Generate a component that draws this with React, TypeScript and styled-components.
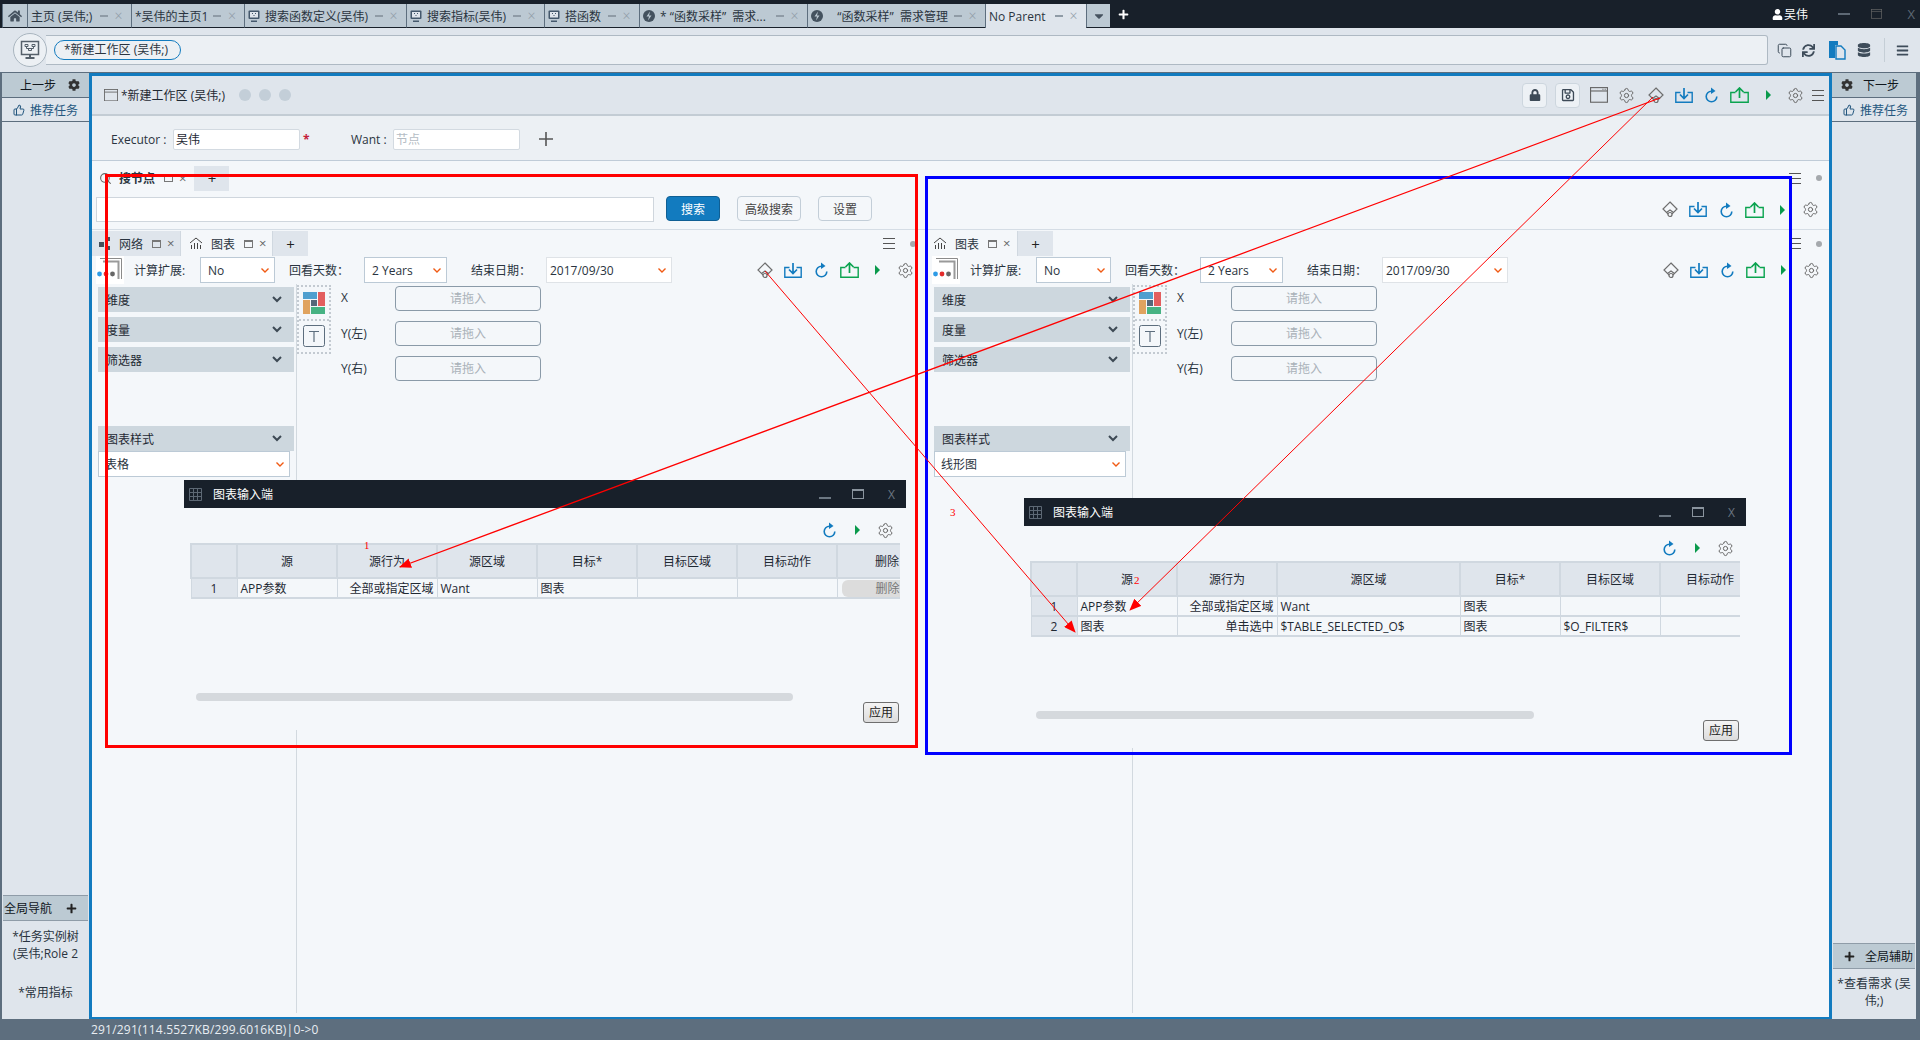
import styled, { createGlobalStyle } from "styled-components";
import { Copy, Search, Settings, ThumbsUp } from "lucide-react";
import { FaBars, FaCaretDown, FaCog, FaDatabase, FaHome, FaLock, FaPlus, FaRegSave, FaSync, FaUser } from "react-icons/fa";
import type { ReactNode } from "react";

const GlobalStyle = createGlobalStyle`
    html, body {
        margin: 0;
        padding: 0;
        background: #dfe5ec;
    }
    body {
        font-family: "Open Sans", "Noto Sans CJK SC", sans-serif;
        font-size: 12px;
        color: #2a3440;
    }
    * {
        box-sizing: border-box;
    }
`;

const Page = styled.div`
    position: relative;
    width: 1920px;
    height: 1040px;
    overflow: hidden;
    display: flex;
    flex-direction: column;
`;

/* title bar */
const TitleBar = styled.div`
    height: 28px;
    background: #18202a;
    display: flex;
    align-items: flex-end;
    padding-left: 2px;
    flex-shrink: 0;
`;
const Tab = styled.div<{ $w: number; $active?: boolean }>`
    width: ${(p) => p.$w}px;
    height: 24px;
    display: flex;
    align-items: center;
    gap: 5px;
    padding: 0 8px 0 3px;
    white-space: pre;
    overflow: hidden;
    background: ${(p) => (p.$active ? "#dfe5ec" : "#bcc9d3")};
    border-left: 1px solid #5d6e7e;
    border-bottom: ${(p) => (p.$active ? "none" : "1px solid #18202a")};
    color: #2a3440;
`;
const HomeTab = styled(Tab)`
    justify-content: center;
    padding: 0;
    color: #45525f;
    font-size: 14px;
`;
const TabControls = styled.span`
    margin-left: auto;
    display: flex;
    align-items: center;
    gap: 6px;
    color: #8f9ba6;
    font-size: 13px;
`;
const TabDash = styled.i`
    display: block;
    width: 8px;
    height: 2px;
    background: #8f9ba6;
`;
const TabClose = styled.span`
    font-size: 14px;
    font-weight: 300;
    line-height: 1;
    width: 9px;
    text-align: center;
`;
const AddTab = styled.div`
    color: #fff;
    font-size: 11px;
    margin-left: 8px;
    align-self: center;
    display: flex;
`;
const WindowArea = styled.div`
    margin-left: auto;
    align-self: center;
    display: flex;
    align-items: center;
    color: #fff;
`;
const UserName = styled.span`
    margin: 0 20px 0 1px;
`;
const WinButton = styled.span`
    width: 32px;
    display: flex;
    justify-content: center;
    color: #5d6874;
    font-size: 13px;
`;
const WinMin = styled(TabDash)`
    width: 12px;
    background: #5d6874;
`;
const WinClose = styled(WinButton)`
    width: 28px;
    justify-content: flex-end;
    padding-right: 5px;
`;

/* address bar */
const AddressBar = styled.div`
    height: 45px;
    flex-shrink: 0;
    background: #dfe5ec;
    border-bottom: 1px solid #5d6e7e;
    display: flex;
    align-items: center;
    padding-left: 13px;
`;
const Logo = styled.div`
    width: 34px;
    height: 34px;
    border-radius: 50%;
    background: #ecf0f4;
    border: 1px solid #a9b5bf;
    display: flex;
    align-items: center;
    justify-content: center;
    position: relative;
    z-index: 1;
    flex-shrink: 0;
`;
const AddressField = styled.div`
    width: 1722px;
    height: 30px;
    margin-left: -1px;
    background: #ecf0f4;
    border: 1px solid #aeb9c3;
    border-left: none;
    border-radius: 0 3px 3px 0;
    display: flex;
    align-items: center;
    padding-left: 8px;
    flex-shrink: 0;
`;
const Pill = styled.div`
    width: 127px;
    height: 20px;
    border: 1px solid #127bbf;
    border-radius: 10px;
    padding-left: 9px;
    line-height: 17px;
    white-space: nowrap;
`;
const AddressTool = styled.span<{ $ml: number }>`
    display: flex;
    margin-left: ${(p) => p.$ml}px;
    color: #3e4c5a;
`;
const ToolSep = styled.i`
    width: 1px;
    height: 24px;
    background: #c5ced6;
    margin-left: 13px;
`;

/* body */
const Body = styled.div`
    flex: 1;
    min-height: 0;
    display: flex;
`;
const Side = styled.div<{ $w: number }>`
    width: ${(p) => p.$w}px;
    flex-shrink: 0;
    display: flex;
    flex-direction: column;
    background: #dfe5ec;
`;
const LeftSide = styled(Side)`
    border-left: 2px solid #5d6e7e;
`;
const RightSide = styled(Side)`
    border-right: 4px solid #5d6e7e;
`;
const StepRow = styled.div`
    height: 25px;
    background: #bccad3;
    border-bottom: 1px solid #5d6e7e;
    display: flex;
    align-items: center;
    color: #10161c;
    font-size: 12px;
`;
const PrevRow = styled(StepRow)`
    padding-left: 18px;
    gap: 12px;
`;
const NextRow = styled(StepRow)`
    padding-left: 9px;
    gap: 10px;
`;
const TaskRow = styled.div`
    height: 24px;
    border-bottom: 1px solid #5d6e7e;
    display: flex;
    align-items: center;
    gap: 5px;
    padding-left: 11px;
    color: #24577f;
`;
const SideBottom = styled.div<{ $h: number }>`
    margin-top: auto;
    height: ${(p) => p.$h}px;
    display: flex;
    flex-direction: column;
    padding: 0 1px;
`;
const NavRow = styled.div`
    height: 26px;
    background: #bccad3;
    border-top: 1px solid #8f9ca8;
    border-bottom: 1px solid #8f9ca8;
    display: flex;
    align-items: center;
    color: #10161c;
    flex-shrink: 0;
    white-space: nowrap;
`;
const LeftNavRow = styled(NavRow)`
    justify-content: space-between;
    padding-right: 11px;
    padding-left: 1px;
`;
const RightNavRow = styled(NavRow)`
    padding-left: 11px;
    gap: 10px;
`;
const NavItem = styled.div<{ $mt: number }>`
    margin-top: ${(p) => p.$mt}px;
    text-align: center;
    line-height: 17px;
    color: #2a3440;
`;

/* main frame */
const Main = styled.div`
    flex: 1;
    min-width: 0;
    position: relative;
    display: flex;
    flex-direction: column;
    border: 3px solid #127bbf;
    border-bottom-width: 2px;
    background: #f4f7fa;
`;
const Header = styled.div`
    height: 40px;
    flex-shrink: 0;
    background: #dfe5ec;
    border-bottom: 2px solid #c3ccd4;
    display: flex;
    align-items: center;
    padding-left: 12px;
`;
const HeaderTitle = styled.span`
    margin: 0 14px 0 3px;
    white-space: nowrap;
    color: #1f2933;
`;
const HeaderDot = styled.i`
    width: 12px;
    height: 12px;
    border-radius: 50%;
    background: #c3ced8;
    margin-right: 8px;
`;
const HeaderTools = styled.div`
    margin-left: auto;
    display: flex;
    align-items: center;
    padding-right: 1px;
`;
const SquareButton = styled.div`
    width: 25px;
    height: 25px;
    border: 1px solid #cdd6de;
    border-radius: 4px;
    background: #edf1f5;
    display: flex;
    align-items: center;
    justify-content: center;
    color: #3d4a57;
    margin-right: 8px;
    font-size: 14px;
`;
const FormRow = styled.div`
    height: 45px;
    flex-shrink: 0;
    background: #ecf0f4;
    border-bottom: 1px solid #c0ccd8;
    display: flex;
    align-items: center;
    padding: 2px 0 0 19px;
`;
const FormLabel = styled.span<{ $w: number }>`
    width: ${(p) => p.$w}px;
    flex-shrink: 0;
    white-space: nowrap;
`;
const FormInput = styled.div<{ $muted?: boolean }>`
    width: 127px;
    height: 21px;
    flex-shrink: 0;
    background: #fff;
    border: 1px solid #d3dae1;
    border-radius: 2px;
    line-height: 19px;
    padding-left: 2px;
    color: ${(p) => (p.$muted ? "#b4bcc4" : "#1f2933")};
`;
const Required = styled.span`
    width: 51px;
    flex-shrink: 0;
    padding-left: 3px;
    color: #c4203a;
    font-weight: 700;
`;
const PlusGlyph = styled.div`
    margin-left: 19px;
    display: flex;
    color: #555;
`;

/* search section */
const SearchHead = styled.div`
    height: 30px;
    flex-shrink: 0;
    padding-top: 4px;
    padding-right: 7px;
    display: flex;
    align-items: center;
`;
const SearchGlyph = styled.span`
    display: flex;
    margin-left: 7px;
    color: #666;
`;
const SearchTitle = styled.span`
    font-weight: 700;
    margin: 0 9px 0 7px;
    color: #2a3440;
`;
const AddPanelTab = styled.div`
    width: 35px;
    height: 25px;
    background: #dfe5ec;
    display: flex;
    align-items: center;
    justify-content: center;
    font-size: 15px;
    color: #222;
    flex-shrink: 0;
`;
const MiniControls = styled.span`
    display: flex;
    align-items: center;
    gap: 6px;
    color: #666;
    margin-right: 8px;
`;
const TabMini = styled(MiniControls)`
    margin-right: 0;
    margin-left: 1px;
`;
const MiniWindow = styled.i`
    width: 9px;
    height: 8px;
    border: 1px solid #777;
    border-top-width: 2px;
`;
const MiniClose = styled.span`
    font-size: 13px;
    line-height: 1;
`;
const SearchBar = styled.div`
    height: 39px;
    flex-shrink: 0;
    display: flex;
    align-items: center;
    padding: 0 5px 1px 4px;
    border-bottom: 1px solid #d5dde5;
`;
const SearchInput = styled.div`
    width: 558px;
    height: 25px;
    background: #fff;
    border: 1px solid #cfd6dd;
    margin-right: 12px;
`;
const Button = styled.div<{ $w: number; $ml?: number; $primary?: boolean }>`
    width: ${(p) => p.$w}px;
    height: 25px;
    margin-left: ${(p) => p.$ml ?? 0}px;
    border-radius: 4px;
    border: 1px solid ${(p) => (p.$primary ? "#0f5f94" : "#c3ced8")};
    background: ${(p) => (p.$primary ? "#127bbf" : "#f4f7fa")};
    color: ${(p) => (p.$primary ? "#fff" : "#444")};
    display: flex;
    align-items: center;
    justify-content: center;
    margin-top: -2px;
`;
const ToolIcons = styled.div`
    margin-left: auto;
    display: flex;
    align-items: center;
`;
const ToolCell = styled.span`
    width: 28px;
    display: flex;
    justify-content: center;
    align-items: center;
`;
const HeaderCell = styled(ToolCell)<{ $w: number }>`
    width: ${(p) => p.$w}px;
`;
const Bars = styled.div`
    display: flex;
    align-items: center;
    gap: 15px;
    margin-left: auto;
`;
const MenuDot = styled.i`
    width: 6px;
    height: 6px;
    border-radius: 50%;
    background: #a5a9ad;
`;

/* panels */
const Panels = styled.div`
    flex: 1;
    min-height: 0;
    display: flex;
    gap: 5px;
`;
const PanelBox = styled.div<{ $grow?: boolean }>`
    display: flex;
    flex-direction: column;
    padding-bottom: 4px;
    ${(p) => (p.$grow ? "flex: 1; min-width: 0;" : "width: 831px; flex-shrink: 0;")}
`;
const PanelTabs = styled.div`
    height: 26px;
    padding: 1px 7px 0 0;
    display: flex;
    flex-shrink: 0;
    align-items: center;
`;
const PanelTab = styled.div<{ $active?: boolean; $w: number; $pl: number }>`
    width: ${(p) => p.$w}px;
    height: 25px;
    display: flex;
    align-items: center;
    gap: 8px;
    padding-left: ${(p) => p.$pl}px;
    background: ${(p) => (p.$active ? "#f4f7fa" : "#dfe5ec")};
    color: #2a3440;
    flex-shrink: 0;
    white-space: nowrap;
    border-right: 1px solid #d0d8e0;
`;
const ControlRow = styled.div`
    height: 28px;
    display: flex;
    flex-shrink: 0;
    align-items: center;
    padding-right: 4px;
`;
const StackIcon = styled.div`
    width: 28px;
    height: 28px;
    margin-left: 4px;
    margin-right: 10px;
    background: #fff;
    flex-shrink: 0;
    display: flex;
`;
const CtlLabel = styled.span<{ $w: number }>`
    width: ${(p) => p.$w}px;
    flex-shrink: 0;
    white-space: nowrap;
`;
const SelectBox = styled.div<{ $w: number; $mr?: number; $soft?: boolean }>`
    width: ${(p) => p.$w}px;
    height: 26px;
    margin-right: ${(p) => p.$mr ?? 0}px;
    background: #fff;
    border: 1px solid ${(p) => (p.$soft ? "#dfe3e7" : "#bccad6")};
    display: flex;
    align-items: center;
    justify-content: space-between;
    padding: 0 5px 0 3px;
    flex-shrink: 0;
    white-space: nowrap;
`;
const CtlSelect = styled(SelectBox)`
    padding-left: 7px;
`;
const PanelBody = styled.div`
    flex: 1;
    min-height: 0;
    display: flex;
`;
const Fields = styled.div`
    width: 205px;
    flex-shrink: 0;
    padding: 3px 2px 0 6px;
    border-right: 1px solid #d2d9df;
    display: flex;
    flex-direction: column;
`;
const Accordion = styled.div<{ $mt?: number }>`
    height: 25px;
    margin-top: ${(p) => p.$mt ?? 0}px;
    margin-bottom: 5px;
    background: #cdd7de;
    display: flex;
    align-items: center;
    justify-content: space-between;
    padding: 0 12px 0 8px;
    color: #1f2933;
`;
const StyleSelect = styled(SelectBox)`
    margin-top: -5px;
    padding-left: 6px;
`;
const ChartTypes = styled.div`
    width: 34px;
    height: 69px;
    margin-top: 1px;
    flex-shrink: 0;
    border: 2px dotted #c3cad1;
    display: flex;
    flex-direction: column;
`;
const ChartType = styled.div`
    flex: 1;
    display: flex;
    align-items: center;
    justify-content: center;
    & + & {
        border-top: 2px dotted #c3cad1;
    }
`;
const DropGrid = styled.div`
    padding: 2px 0 0 10px;
    display: grid;
    grid-template-columns: 54px 146px;
    grid-auto-rows: 25px;
    row-gap: 10px;
    align-items: center;
    align-content: start;
`;
const DropLabel = styled.span`
    margin-bottom: 2px;
`;
const DropBox = styled.div`
    height: 25px;
    border: 1px solid #8a9aa8;
    border-radius: 4px;
    text-align: center;
    line-height: 23px;
    color: #a9b1b8;
`;

/* floating dialogs */
const Dialog = styled.div<{ $left: number; $top: number }>`
    position: absolute;
    left: ${(p) => p.$left}px;
    top: ${(p) => p.$top}px;
    width: 722px;
    height: 250px;
    background: #f4f7fa;
`;
const DialogTitle = styled.div`
    height: 28px;
    background: #18202a;
    color: #fff;
    display: flex;
    align-items: center;
    padding-left: 5px;
`;
const DialogName = styled.span`
    margin-left: 11px;
`;
const DialogControls = styled.div`
    margin-left: auto;
    display: flex;
    align-items: center;
    gap: 21px;
    padding-right: 11px;
    color: #6c7782;
`;
const DialogMin = styled.i`
    width: 12px;
    height: 2px;
    background: #6c7782;
    margin-top: 8px;
`;
const DialogMax = styled.i`
    width: 12px;
    height: 10px;
    border: 1px solid #8a949e;
    border-top-width: 2px;
`;
const DialogClose = styled.span`
    margin-left: 3px;
`;
const DialogTools = styled.div`
    height: 35px;
    display: flex;
    align-items: center;
    justify-content: flex-end;
    padding: 9px 7px 0 0;
`;
const TableClip = styled.div`
    margin-left: 6px;
    width: 710px;
    height: 150px;
    overflow: hidden;
`;
const Table = styled.table<{ $w: number }>`
    width: ${(p) => p.$w}px;
    border-collapse: collapse;
    table-layout: fixed;
    color: #1f2933;
`;
const HeadCell = styled.th`
    height: 34px;
    background: #dfe5ec;
    border: 2px solid #d0d8e0;
    font-weight: 400;
    text-align: center;
    padding: 0;
    white-space: nowrap;
`;
const IndexCell = styled.td`
    background: #dfe5ec;
    border: 1px solid #d0d8e0;
    border-bottom-width: 2px;
    text-align: center;
    height: 20px;
    padding: 0;
`;
const Cell = styled.td<{ $right?: boolean }>`
    border: 1px solid #d0d8e0;
    border-bottom-width: 2px;
    height: 20px;
    padding: 0 3px;
    white-space: nowrap;
    overflow: hidden;
    text-align: ${(p) => (p.$right ? "right" : "left")};
`;
const DeleteButton = styled.div`
    margin: 0 0 0 1px;
    height: 17px;
    line-height: 17px;
    border-radius: 6px;
    background: #dcdcdc;
    color: #777;
    text-align: center;
`;
const ScrollTrack = styled.div<{ $w: number }>`
    margin-left: 12px;
    width: ${(p) => p.$w}px;
    height: 8px;
    border-radius: 4px;
    background: #d5d9dd;
`;
const ApplyRow = styled.div`
    display: flex;
    justify-content: flex-end;
    padding-right: 7px;
    margin-top: 1px;
`;
const ApplyButton = styled.div`
    width: 36px;
    height: 21px;
    border: 1px solid #6e6e6e;
    border-radius: 3px;
    background: linear-gradient(#f4f4f4, #dcdcdc);
    text-align: center;
    line-height: 19px;
    color: #222;
`;

const StatusBar = styled.div`
    height: 21px;
    flex-shrink: 0;
    background: #5d6e7e;
    color: #e8edf2;
    padding-left: 91px;
    line-height: 21px;
    letter-spacing: 0.2px;
`;

const Overlay = styled.svg`
    position: absolute;
    left: 0;
    top: 0;
    pointer-events: none;
`;
const NoteText = styled.text`
    fill: #f00;
    font-size: 11px;
    font-family: "Liberation Serif", serif;
`;

/* drawn icons */
const Diamond = () => (
    <svg width="16" height="17" viewBox="0 0 16 17" fill="none" stroke="#6e6e6e" strokeWidth="1.2">
        <path d="M8 1 15 8 8 15 1 8Z" />
        <path d="M4.5 11.5 8 9l3.5 2.5" />
        <circle cx="8" cy="13.5" r="2" fill="#f4f7fa" />
    </svg>
);
const Download = () => (
    <svg width="18" height="15" viewBox="0 0 18 15" fill="none" stroke="#127bbf" strokeWidth="1.4">
        <path d="M5.5 4.5H.8v9.7h16.4V4.5h-4.7" />
        <path d="M9 0v10M5 6.5l4 4 4-4" strokeWidth="1.7" />
    </svg>
);
const Upload = () => (
    <svg width="19" height="16" viewBox="0 0 19 16" fill="none" stroke="#0aa34f" strokeWidth="1.4">
        <path d="M5.5 5.5H.8v9.7h17.4V5.5h-4.7" />
        <path d="M9.5 11V1.2M5.5 5l4-4 4 4" strokeWidth="1.7" />
    </svg>
);
const Refresh = () => (
    <svg width="13" height="16" viewBox="0 0 13 16" fill="none">
        <path d="M6.5 4.2A5.3 5.3 0 1 0 11.8 9.5" stroke="#127bbf" strokeWidth="1.6" />
        <path d="M6 .5 10.5 4 6 7Z" fill="#127bbf" />
    </svg>
);
const Play = () => (
    <svg width="5" height="10" viewBox="0 0 5 10">
        <path d="M0 0 5 5 0 10Z" fill="#0a9a4c" />
    </svg>
);
const Gear = () => <Settings size={17} strokeWidth={1.4} color="#666" />;
const ThinBars = () => (
    <svg width="12" height="11" viewBox="0 0 12 11" stroke="#555" strokeWidth="1">
        <path d="M0 .5h12M0 5.5h12M0 10.5h12" />
    </svg>
);
const Chevron = () => (
    <svg width="10" height="7" viewBox="0 0 10 7" fill="none" stroke="#3d4954" strokeWidth="2">
        <path d="M1 1l4 4 4-4" />
    </svg>
);
const OrangeChevron = () => (
    <svg width="8" height="5" viewBox="0 0 8 5" fill="none" stroke="#f05a14" strokeWidth="1.4">
        <path d="M.5.5 4 4 7.5.5" />
    </svg>
);
const MonitorIcon = ({ size = 12 }: { size?: number }) => (
    <svg width={size} height={size} viewBox="0 0 12 12">
        <rect x=".5" y=".5" width="11" height="8.5" rx="1" fill="#44586c" />
        <rect x="2" y="2" width="8" height="5.5" fill="#dfe5ec" />
        <path d="M4 3h1v1H4zM7 3h1v1H7zM5.5 5h1v1h-1zM3 10.5h6V12H3z" fill="#44586c" />
    </svg>
);
const GlobeIcon = () => (
    <svg width="12" height="12" viewBox="0 0 12 12">
        <circle cx="6" cy="6" r="6" fill="#44525f" />
        <path d="M7 1.5 3.5 6.5H6l-1 4 3.5-5H6Z" fill="#bcc9d3" />
    </svg>
);
const LogoIcon = () => (
    <svg width="20" height="20" viewBox="0 0 20 20" fill="none" stroke="#55606b">
        <rect x="1.5" y="1.5" width="17" height="13" strokeWidth="1.5" />
        <path d="M5 4.5h3v2H5zM12 4.5h3v2h-3zM8.5 8.5h3v2h-3zM6.5 6.5v2h7v-2" />
        <path d="M10 14.5v2.5M5.5 18h9" strokeWidth="2" />
    </svg>
);
const WindowIcon = ({ size = 14, dots }: { size?: number; dots?: boolean }) => (
    <svg width={size} height={size * 0.88} viewBox="0 0 16 14" fill="none" stroke="#666">
        <rect x=".5" y=".5" width="15" height="13" />
        <path d="M.5 3.5h15" />
        {dots && <path d="M11 2h1M13 2h1" />}
    </svg>
);
const ChartTabIcon = () => (
    <svg width="14" height="13" viewBox="0 0 14 13" fill="none" stroke="#444">
        <path d="M1 6 7 1l6 5M2.5 12V8M5.5 12V6M8.5 12V6M11.5 12V8" />
    </svg>
);
const NetworkIcon = () => (
    <svg width="12" height="13" viewBox="0 0 12 13" fill="#44505c">
        <path d="M0 5h5v5H0zM7 0h4v4H7zM7 9h4v4H7z" />
    </svg>
);
const Stack = () => (
    <svg width="28" height="28" viewBox="0 0 28 28" fill="none">
        <path d="M4 2.5h21.5V23" stroke="#8b8b8b" />
        <path d="M7 5.5h15.5V23" stroke="#9a9a9a" strokeWidth="2" />
        <circle cx="3.5" cy="18" r="2.4" fill="#2d9be6" />
        <circle cx="10" cy="18" r="2.4" fill="#e42c2c" />
        <circle cx="16.5" cy="18" r="2.4" fill="#666" />
    </svg>
);
const TreemapIcon = () => (
    <svg width="22" height="22" viewBox="0 0 22 22">
        <rect x="0" y="0" width="14" height="7" fill="#4f9fcf" />
        <rect x="15" y="0" width="7" height="14" fill="#e35e5e" />
        <rect x="0" y="8" width="7" height="14" fill="#e0a35f" />
        <rect x="8" y="8" width="6" height="6" fill="#55677a" />
        <rect x="8" y="15" width="14" height="7" fill="#46b283" />
    </svg>
);
const TextIcon = () => (
    <svg width="22" height="22" viewBox="0 0 22 22" fill="none" stroke="#5d6e7e">
        <rect x=".5" y=".5" width="21" height="21" rx="2" />
        <path d="M6 6.5h10M11 6.5V17" strokeWidth="1.2" />
    </svg>
);
const GridIcon = () => (
    <svg width="13" height="13" viewBox="0 0 13 13" fill="none" stroke="#5d6874">
        <path d="M.5.5h12v12H.5zM.5 4.5h12M.5 8.5h12M4.5.5v12M8.5.5v12" />
    </svg>
);
const FilesIcon = () => (
    <svg width="17" height="19" viewBox="0 0 17 19">
        <path d="M0 0h9v4H6v13H0Z" fill="#127bbf" />
        <path d="M7 5h5l4 4v9H7Z" fill="#dfe5ec" stroke="#127bbf" strokeWidth="1.4" />
    </svg>
);

const Tools = () => (
    <ToolIcons>
        <ToolCell><Diamond /></ToolCell>
        <ToolCell><Download /></ToolCell>
        <ToolCell><Refresh /></ToolCell>
        <ToolCell><Upload /></ToolCell>
        <ToolCell><Play /></ToolCell>
        <ToolCell><Gear /></ToolCell>
    </ToolIcons>
);

const topTabs: { w: number; icon?: ReactNode; label: string }[] = [
    { w: 104, label: "主页 (吴伟;)" },
    { w: 113, label: "*吴伟的主页1" },
    { w: 162, icon: <MonitorIcon />, label: "搜索函数定义(吴伟)" },
    { w: 138, icon: <MonitorIcon />, label: "搜索指标(吴伟)" },
    { w: 95, icon: <MonitorIcon />, label: "搭函数" },
    { w: 168, icon: <GlobeIcon />, label: "* “函数采样”  需求..." },
    { w: 178, icon: <GlobeIcon />, label: "   “函数采样”  需求管理" },
];

const DialogHead = () => (
    <DialogTitle>
        <GridIcon />
        <DialogName>图表输入端</DialogName>
        <DialogControls>
            <DialogMin />
            <DialogMax />
            <DialogClose>X</DialogClose>
        </DialogControls>
    </DialogTitle>
);

const DialogActions = () => (
    <DialogTools>
        <ToolCell><Refresh /></ToolCell>
        <ToolCell><Play /></ToolCell>
        <ToolCell><Gear /></ToolCell>
    </DialogTools>
);

function Panel({ grow, withNetwork, style }: { grow?: boolean; withNetwork?: boolean; style: string }) {
    return (
        <PanelBox $grow={grow}>
            <PanelTabs>
                {withNetwork && (
                    <PanelTab $w={89} $pl={7}>
                        <NetworkIcon />
                        网络
                        <TabMini><MiniWindow /><MiniClose>×</MiniClose></TabMini>
                    </PanelTab>
                )}
                <PanelTab $w={withNetwork ? 92 : 90} $pl={withNetwork ? 8 : 5} $active>
                    <ChartTabIcon />
                    图表
                    <TabMini><MiniWindow /><MiniClose>×</MiniClose></TabMini>
                </PanelTab>
                <AddPanelTab>+</AddPanelTab>
                <Bars>
                    <ThinBars />
                    <MenuDot />
                </Bars>
            </PanelTabs>
            <ControlRow>
                <StackIcon><Stack /></StackIcon>
                <CtlLabel $w={66}>计算扩展:</CtlLabel>
                <CtlSelect $w={75} $mr={14}>No<OrangeChevron /></CtlSelect>
                <CtlLabel $w={75}>回看天数：</CtlLabel>
                <CtlSelect $w={83} $mr={24}>2 Years<OrangeChevron /></CtlSelect>
                <CtlLabel $w={75}>结束日期：</CtlLabel>
                <SelectBox $w={126} $soft>2017/09/30<OrangeChevron /></SelectBox>
                <Tools />
            </ControlRow>
            <PanelBody>
                <Fields>
                    <Accordion>维度<Chevron /></Accordion>
                    <Accordion>度量<Chevron /></Accordion>
                    <Accordion>筛选器<Chevron /></Accordion>
                    <Accordion $mt={49}>图表样式<Chevron /></Accordion>
                    <StyleSelect $w={192}>{style}<OrangeChevron /></StyleSelect>
                </Fields>
                <ChartTypes>
                    <ChartType><TreemapIcon /></ChartType>
                    <ChartType><TextIcon /></ChartType>
                </ChartTypes>
                <DropGrid>
                    <DropLabel>X</DropLabel><DropBox>请拖入</DropBox>
                    <DropLabel>Y(左)</DropLabel><DropBox>请拖入</DropBox>
                    <DropLabel>Y(右)</DropLabel><DropBox>请拖入</DropBox>
                </DropGrid>
            </PanelBody>
        </PanelBox>
    );
}

export default function App() {
    return (
        <Page>
            <GlobalStyle />
            <TitleBar>
                <HomeTab $w={25}><FaHome /></HomeTab>
                {topTabs.map((t) => (
                    <Tab key={t.label} $w={t.w}>
                        {t.icon}
                        <span>{t.label}</span>
                        <TabControls><TabDash /><TabClose>×</TabClose></TabControls>
                    </Tab>
                ))}
                <Tab $w={101} $active>
                    <span>No Parent</span>
                    <TabControls><TabDash /><TabClose>×</TabClose></TabControls>
                </Tab>
                <HomeTab $w={24}><FaCaretDown /></HomeTab>
                <AddTab><FaPlus /></AddTab>
                <WindowArea>
                    <FaUser size={11} />
                    <UserName>吴伟</UserName>
                    <WinButton><WinMin /></WinButton>
                    <WinButton><WindowIcon size={11} /></WinButton>
                    <WinClose>X</WinClose>
                </WindowArea>
            </TitleBar>

            <AddressBar>
                <Logo><LogoIcon /></Logo>
                <AddressField><Pill>*新建工作区 (吴伟;)</Pill></AddressField>
                <AddressTool $ml={9}><Copy size={15} strokeWidth={1.6} /></AddressTool>
                <AddressTool $ml={10}><FaSync size={13} /></AddressTool>
                <AddressTool $ml={14}><FilesIcon /></AddressTool>
                <AddressTool $ml={11}><FaDatabase size={14} /></AddressTool>
                <ToolSep />
                <AddressTool $ml={11}><FaBars size={13} /></AddressTool>
            </AddressBar>

            <Body>
                <LeftSide $w={89}>
                    <PrevRow>上一步<FaCog size={12} color="#333" /></PrevRow>
                    <TaskRow><ThumbsUp size={12} />推荐任务</TaskRow>
                    <SideBottom $h={124}>
                        <LeftNavRow>全局导航<FaPlus size={11} color="#222" /></LeftNavRow>
                        <NavItem $mt={7}>*任务实例树<br />(吴伟;Role 2</NavItem>
                        <NavItem $mt={22}>*常用指标</NavItem>
                    </SideBottom>
                </LeftSide>

                <Main>
                    <Header>
                        <WindowIcon size={14} />
                        <HeaderTitle>*新建工作区 (吴伟;)</HeaderTitle>
                        <HeaderDot /><HeaderDot /><HeaderDot />
                        <HeaderTools>
                            <SquareButton><FaLock size={12} /></SquareButton>
                            <SquareButton><FaRegSave size={14} /></SquareButton>
                            <HeaderCell $w={22}><WindowIcon size={18} dots /></HeaderCell>
                            <HeaderCell $w={32}><Gear /></HeaderCell>
                            <HeaderCell $w={28}><Diamond /></HeaderCell>
                            <HeaderCell $w={28}><Download /></HeaderCell>
                            <HeaderCell $w={27}><Refresh /></HeaderCell>
                            <HeaderCell $w={29}><Upload /></HeaderCell>
                            <HeaderCell $w={28}><Play /></HeaderCell>
                            <HeaderCell $w={26}><Gear /></HeaderCell>
                            <HeaderCell $w={20}><ThinBars /></HeaderCell>
                        </HeaderTools>
                    </Header>
                    <FormRow>
                        <FormLabel $w={62}>Executor :</FormLabel>
                        <FormInput>吴伟</FormInput>
                        <Required>*</Required>
                        <FormLabel $w={42}>Want :</FormLabel>
                        <FormInput $muted>节点</FormInput>
                        <PlusGlyph>
                            <svg width="14" height="14" viewBox="0 0 14 14" stroke="#555" strokeWidth="1.6"><path d="M7 0v14M0 7h14" /></svg>
                        </PlusGlyph>
                    </FormRow>

                    <SearchHead>
                        <SearchGlyph><Search size={13} strokeWidth={2} /></SearchGlyph>
                        <SearchTitle>搜节点</SearchTitle>
                        <MiniControls><MiniWindow /><MiniClose>×</MiniClose></MiniControls>
                        <AddPanelTab>+</AddPanelTab>
                        <Bars><ThinBars /><MenuDot /></Bars>
                    </SearchHead>
                    <SearchBar>
                        <SearchInput />
                        <Button $w={54} $primary>搜索</Button>
                        <Button $w={64} $ml={17}>高级搜索</Button>
                        <Button $w={54} $ml={17}>设置</Button>
                        <Tools />
                    </SearchBar>

                    <Panels>
                        <Panel withNetwork style="表格" />
                        <Panel grow style="线形图" />
                    </Panels>

                    <Dialog $left={92} $top={404}>
                        <DialogHead />
                        <DialogActions />
                        <TableClip>
                            <Table $w={746}>
                                <colgroup>
                                    <col width="46" />
                                    {[0, 1, 2, 3, 4, 5, 6].map((i) => <col key={i} width="100" />)}
                                </colgroup>
                                <thead>
                                    <tr>
                                        <HeadCell />
                                        <HeadCell>源</HeadCell>
                                        <HeadCell>源行为</HeadCell>
                                        <HeadCell>源区域</HeadCell>
                                        <HeadCell>目标*</HeadCell>
                                        <HeadCell>目标区域</HeadCell>
                                        <HeadCell>目标动作</HeadCell>
                                        <HeadCell>删除</HeadCell>
                                    </tr>
                                </thead>
                                <tbody>
                                    <tr>
                                        <IndexCell>1</IndexCell>
                                        <Cell>APP参数</Cell>
                                        <Cell $right>全部或指定区域</Cell>
                                        <Cell>Want</Cell>
                                        <Cell>图表</Cell>
                                        <Cell />
                                        <Cell />
                                        <Cell><DeleteButton>删除</DeleteButton></Cell>
                                    </tr>
                                </tbody>
                            </Table>
                        </TableClip>
                        <ScrollTrack $w={597} />
                        <ApplyRow><ApplyButton>应用</ApplyButton></ApplyRow>
                    </Dialog>

                    <Dialog $left={932} $top={422}>
                        <DialogHead />
                        <DialogActions />
                        <TableClip>
                            <Table $w={729}>
                                <colgroup>
                                    <col width="46" />
                                    <col width="100" />
                                    <col width="100" />
                                    <col width="183" />
                                    <col width="100" />
                                    <col width="100" />
                                    <col width="100" />
                                </colgroup>
                                <thead>
                                    <tr>
                                        <HeadCell />
                                        <HeadCell>源</HeadCell>
                                        <HeadCell>源行为</HeadCell>
                                        <HeadCell>源区域</HeadCell>
                                        <HeadCell>目标*</HeadCell>
                                        <HeadCell>目标区域</HeadCell>
                                        <HeadCell>目标动作</HeadCell>
                                    </tr>
                                </thead>
                                <tbody>
                                    <tr>
                                        <IndexCell>1</IndexCell>
                                        <Cell>APP参数</Cell>
                                        <Cell $right>全部或指定区域</Cell>
                                        <Cell>Want</Cell>
                                        <Cell>图表</Cell>
                                        <Cell />
                                        <Cell />
                                    </tr>
                                    <tr>
                                        <IndexCell>2</IndexCell>
                                        <Cell>图表</Cell>
                                        <Cell $right>单击选中</Cell>
                                        <Cell>$TABLE_SELECTED_O$</Cell>
                                        <Cell>图表</Cell>
                                        <Cell>$O_FILTER$</Cell>
                                        <Cell />
                                    </tr>
                                </tbody>
                            </Table>
                        </TableClip>
                        <ScrollTrack $w={498} />
                        <ApplyRow><ApplyButton>应用</ApplyButton></ApplyRow>
                    </Dialog>
                </Main>

                <RightSide $w={88}>
                    <NextRow><FaCog size={12} color="#333" />下一步</NextRow>
                    <TaskRow><ThumbsUp size={12} />推荐任务</TaskRow>
                    <SideBottom $h={76}>
                        <RightNavRow><FaPlus size={11} color="#222" />全局辅助</RightNavRow>
                        <NavItem $mt={6}>*查看需求 (吴伟;)</NavItem>
                    </SideBottom>
                </RightSide>
            </Body>

            <StatusBar>291/291(114.5527KB/299.6016KB)|0-&gt;0</StatusBar>

            <Overlay width="1920" height="1040" viewBox="0 0 1920 1040">
                <defs>
                    <marker id="head" markerWidth="12" markerHeight="10" refX="11" refY="5" orient="auto" markerUnits="userSpaceOnUse">
                        <path d="M0 0 12 5 0 10Z" fill="#f00" />
                    </marker>
                </defs>
                <rect x="106.5" y="175.5" width="810" height="571" fill="none" stroke="#f00" strokeWidth="3" />
                <rect x="926.5" y="177.5" width="864" height="576" fill="none" stroke="#00f" strokeWidth="3" />
                <path d="M1660 98 400 567" stroke="#f00" strokeWidth="1.3" fill="none" markerEnd="url(#head)" />
                <path d="M1653 97 1130 610" stroke="#f00" strokeWidth="1" fill="none" markerEnd="url(#head)" />
                <path d="M765 271 1075 632" stroke="#f00" strokeWidth="1" fill="none" markerEnd="url(#head)" />
                <NoteText x="364" y="549">1</NoteText>
                <NoteText x="1134" y="584">2</NoteText>
                <NoteText x="950" y="516">3</NoteText>
            </Overlay>
        </Page>
    );
}
